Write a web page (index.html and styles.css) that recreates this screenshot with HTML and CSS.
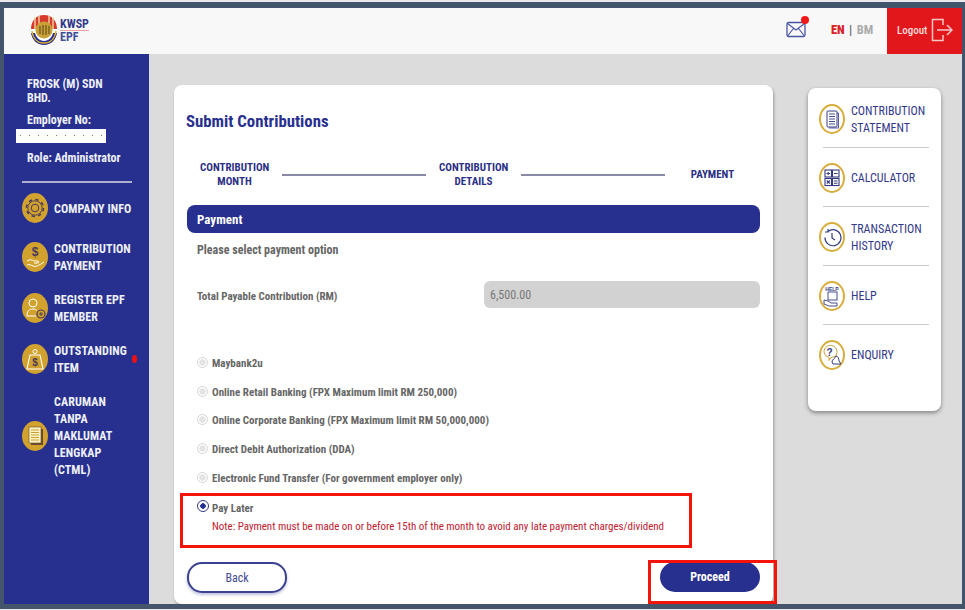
FILE: index.html
```html
<!DOCTYPE html>
<html lang="en">
<head>
<meta charset="utf-8">
<title>Submit Contributions</title>
<link rel="stylesheet" href="styles.css">
</head>
<body>
<div class="frame">
  <header class="topbar">
    <div class="brand">
      <svg class="logo" viewBox="0 0 28 32" width="28" height="32">
        <ellipse cx="14" cy="16" rx="13.500" ry="15.500" fill="#fff"/>
        <path d="M1 15C1 7 6 1 14 1s13 6 13 14z" fill="#d8392f"/>
        <path d="M5 3v12M9 2v13M19 2v13M23 3v12" stroke="#f3d9a0" stroke-width="1.400"/>
        <path d="M1 19c1 7 6 12 13 12s12-5 13-12l-4 0c-1 4-4 8-9 8s-8-4-9-8z" fill="#27308f"/>
        <path d="M2 17c1 8 6 12 12 12s11-4 12-12" fill="none" stroke="#e2b22c" stroke-width="1.400"/>
        <circle cx="14" cy="16" r="8.500" fill="#c9a035"/>
        <path d="M10 12v8M13 11v10M16 11v10M19 12v8" stroke="#6b5420" stroke-width="1.200"/>
      </svg>
      <div class="brand-text"><span class="brand-top">KWSP</span><span class="brand-bottom">EPF</span></div>
    </div>
    <div class="top-actions">
      <span class="mail">
        <svg viewBox="0 0 20 17" width="20" height="17"><rect x="1" y="1.500" width="18" height="14" rx="1.500" fill="none" stroke="#4a55a2" stroke-width="1.300"/><path d="M1.500 2.500 10 9l8.500-6.500M1.500 15 7.500 7.500M18.500 15 12.500 7.500" fill="none" stroke="#4a55a2" stroke-width="1.200"/></svg>
        <i class="mail-dot"></i>
      </span>
      <div class="lang"><b class="lang-on">EN</b> <span class="lang-sep">|</span> <span class="lang-off">BM</span></div>
      <div class="logout">
        <span>Logout</span>
        <svg viewBox="0 0 22 24" width="22" height="24"><path d="M12 7V1.500H1.500v21H12V17" fill="none" stroke="#f6c7c7" stroke-width="1.500"/><path d="M6 12h15M16 7l5 5-5 5" fill="none" stroke="#f6c7c7" stroke-width="1.500"/></svg>
      </div>
    </div>
  </header>
  <div class="body-row">
    <aside class="sidebar">
      <div class="profile">
        <p class="company">FROSK (M) SDN<br>BHD.</p>
        <p class="employer">Employer No:</p>
        <div class="redacted"></div>
        <p class="role">Role: Administrator</p>
      </div>
      <hr class="side-rule">
      <nav class="side-nav">
        <a class="side-item">
          <span class="side-icon"><svg viewBox="0 0 26 30" width="26" height="30"><circle cx="13" cy="15" r="8.500" fill="none" stroke="#4b3a5c" stroke-width="1.600" stroke-dasharray="3.340 3.340"/><circle cx="13" cy="15" r="7.200" fill="none" stroke="#4b3a5c" stroke-width=".9"/><circle cx="13" cy="15" r="3.800" fill="none" stroke="#4b3a5c" stroke-width="1"/></svg></span>
          <span class="side-label">COMPANY INFO</span>
        </a>
        <a class="side-item">
          <span class="side-icon"><svg viewBox="0 0 26 30" width="26" height="30"><text x="13" y="14" class="icon-dollar">$</text><path d="M5 19c3-2 5-1 7 0h4c1 0 1 2 0 2h-4M5 23c2-1 4 0 6 1 3 1 5 0 11-4" fill="none" stroke="#fff" stroke-width="1"/></svg></span>
          <span class="side-label">CONTRIBUTION<br>PAYMENT</span>
        </a>
        <a class="side-item">
          <span class="side-icon"><svg viewBox="0 0 26 30" width="26" height="30"><circle cx="11" cy="10" r="4" fill="none" stroke="#fff" stroke-width="1"/><path d="M5 23c0-5 2-7 6-7 2 0 3 .500 4 1.500M5 23h9" fill="none" stroke="#fff" stroke-width="1"/><circle cx="19" cy="21" r="4" fill="none" stroke="#4b3a5c" stroke-width="1.200"/><path d="M19 19v4M17 21h4" stroke="#4b3a5c"/></svg></span>
          <span class="side-label">REGISTER EPF<br>MEMBER</span>
        </a>
        <a class="side-item">
          <span class="side-icon"><svg viewBox="0 0 26 30" width="26" height="30"><path d="M8 11h10l3 14H5z" fill="none" stroke="#fff" stroke-width="1.100"/><circle cx="13" cy="7.500" r="2" fill="none" stroke="#fff"/><text x="13" y="22" class="icon-bag">$</text></svg></span>
          <span class="side-label">OUTSTANDING<br>ITEM</span>
          <i class="side-dot"></i>
        </a>
        <a class="side-item">
          <span class="side-icon"><svg viewBox="0 0 26 30" width="26" height="30"><rect x="9" y="8" width="12" height="16" fill="#6b4a28"/><rect x="7" y="6" width="12" height="16" fill="#fbf2c4" stroke="#6b4a28" stroke-width=".6"/><path d="M9 9h8M9 11.500h8M9 14h8M9 16.500h8M9 19h8" stroke="#c9a035"/></svg></span>
          <span class="side-label">CARUMAN<br>TANPA<br>MAKLUMAT<br>LENGKAP<br>(CTML)</span>
        </a>
      </nav>
    </aside>
    <main class="content">
      <section class="card">
        <h1 class="title">Submit Contributions</h1>
        <div class="stepper">
          <span class="step">CONTRIBUTION<br>MONTH</span>
          <span class="step-line"></span>
          <span class="step">CONTRIBUTION<br>DETAILS</span>
          <span class="step-line"></span>
          <span class="step step-last">PAYMENT</span>
        </div>
        <div class="bar">Payment</div>
        <div class="inner">
          <p class="prompt">Please select payment option</p>
          <div class="total">
            <span class="total-label">Total Payable Contribution (RM)</span>
            <div class="total-value">6,500.00</div>
          </div>
          <ul class="options">
            <li class="option"><i class="radio"></i>Maybank2u</li>
            <li class="option"><i class="radio"></i>Online Retail Banking (FPX Maximum limit RM 250,000)</li>
            <li class="option"><i class="radio"></i>Online Corporate Banking (FPX Maximum limit RM 50,000,000)</li>
            <li class="option"><i class="radio"></i>Direct Debit Authorization (DDA)</li>
            <li class="option"><i class="radio"></i>Electronic Fund Transfer (For government employer only)</li>
          </ul>
          <div class="paylater">
            <div class="option"><i class="radio radio-on"></i>Pay Later</div>
            <p class="note">Note: Payment must be made on or before 15th of the month to avoid any late payment charges/dividend</p>
          </div>
        </div>
        <div class="actions">
          <button class="btn btn-back">Back</button>
          <button class="btn btn-go">Proceed</button>
        </div>
        <div class="mark mark-later"></div>
        <div class="mark mark-go"></div>
      </section>
      <aside class="tools">
        <a class="tool">
          <span class="tool-icon"><svg viewBox="0 0 26 30" width="26" height="30"><rect x="8" y="7" width="10" height="16" rx="1" fill="none" stroke="#333a80" stroke-width="1"/><path d="M10 10h6M10 12.500h6M10 15h6M10 17.500h6M10 20h6" stroke="#333a80" stroke-width=".9"/><path d="M18 9h1.500v15H10" fill="none" stroke="#333a80" stroke-width=".8"/></svg></span>
          <span class="tool-label">CONTRIBUTION<br>STATEMENT</span>
        </a>
        <a class="tool">
          <span class="tool-icon"><svg viewBox="0 0 26 30" width="26" height="30"><g fill="none" stroke="#333a80" stroke-width="1.100"><rect x="6" y="7" width="6.500" height="7"/><rect x="13.500" y="7" width="6.500" height="7"/><rect x="6" y="15.500" width="6.500" height="7"/><rect x="13.500" y="15.500" width="6.500" height="7"/><path d="M7.500 10.500h3.500M9.200 9v3M15 10.500h3.500M7.800 17.500l3 3M10.800 17.500l-3 3M15 18h3.500M15 20.300h3.500"/></g></svg></span>
          <span class="tool-label">CALCULATOR</span>
        </a>
        <a class="tool">
          <span class="tool-icon"><svg viewBox="0 0 26 30" width="26" height="30"><g fill="none" stroke="#333a80" stroke-width="1.200"><path d="M9 9.500a8 8 0 1 1-3 6"/><path d="M9 7v3H6"/><path d="M13 11v5l3 2"/></g></svg></span>
          <span class="tool-label">TRANSACTION<br>HISTORY</span>
        </a>
        <a class="tool">
          <span class="tool-icon"><svg viewBox="0 0 26 30" width="26" height="30"><text x="13" y="9.500" class="icon-help">HELP</text><g fill="none" stroke="#333a80" stroke-width=".9"><rect x="9" y="11" width="9" height="8"/><path d="M5 19l4 1 3 2h6v3H10l-5-2z"/></g></svg></span>
          <span class="tool-label">HELP</span>
        </a>
        <a class="tool">
          <span class="tool-icon"><svg viewBox="0 0 26 30" width="26" height="30"><path d="M5 12a6.500 6.500 0 1 1 11 4.500l-4 1-2 3v-3a6.500 6.500 0 0 1-5-5.500z" fill="none" stroke="#c9a035" stroke-width="1"/><text x="10.500" y="16" class="icon-q">?</text><path d="M13 22c0-3 3-3 4-6 2 0 3 3 3 5l2 3h-8z" fill="none" stroke="#333a80" stroke-width="1"/></svg></span>
          <span class="tool-label">ENQUIRY</span>
        </a>
      </aside>
    </main>
  </div>
</div>
</body>
</html>
```

FILE: styles.css
```css
* { box-sizing: border-box; }
html, body { margin: 0; padding: 0; }
body {
  width: 965px;
  height: 610px;
  padding-top: 2px;
  overflow: hidden;
  background: #e9e9ea;
  font-family: Roboto, "Liberation Sans", Arial, sans-serif;
  font-stretch: 75%;
}
button { font-stretch: inherit; }
p, h1, ul { margin: 0; padding: 0; list-style: none; }
.frame {
  width: 965px;
  height: 607px;
  border: solid #44546a;
  border-width: 6px 3px 5px 4px;
  display: flex;
  flex-direction: column;
  overflow: hidden;
}
.topbar {
  height: 46px;
  flex: none;
  display: flex;
  justify-content: space-between;
  background: #f8f8f9;
}
.brand { display: flex; align-items: center; gap: 2px; padding: 0 0 2px 26px; }
.logo { display: block; }
.brand-text { display: flex; flex-direction: column; color: #34398c; font-size: 12px; font-weight: 700; line-height: 12px; }
.brand-top { border-bottom: 1px solid #e6a0a8; }
.brand-bottom { color: #3f4f96; }
.top-actions { display: flex; align-items: center; }
.mail { position: relative; display: block; width: 20px; height: 17px; margin: 0 25px 3px 0; }
.mail svg { display: block; }
.mail-dot { position: absolute; right: -3px; top: -5px; width: 8px; height: 8px; border-radius: 50%; background: #f01818; }
.lang { width: 56px; padding-bottom: 3px; font-size: 12.500px; word-spacing: 1.500px; color: #999; font-weight: 700; white-space: nowrap; }
.lang-on { color: #d9232a; }
.lang-sep { color: #666; }
.lang-off { color: #aaa; font-weight: 700; }
.logout {
  width: 75px;
  height: 46px;
  display: flex;
  align-items: center;
  gap: 4px;
  padding: 0 0 2px 10px;
  background: #e2171c;
  color: #f8dcdc;
  font-size: 11px;
  font-weight: 500;
}
.logout svg { display: block; }
.body-row { flex: 1; min-height: 0; display: flex; }
.sidebar {
  width: 145px;
  flex: none;
  padding: 23px 0 0 18px;
  background: #28308f;
  color: #eef0f8;
  font-size: 12px;
  font-weight: 700;
}
.profile { padding-left: 5px; line-height: 14px; }
.employer { margin-top: 8px; }
.redacted {
  width: 90px;
  height: 14px;
  margin: 2px 0 0 -11px;
  background: #fff radial-gradient(circle, #777 0.6px, transparent 1px) 0 2px / 9px 9px;
}
.role { margin-top: 8px; }
.side-rule { width: 110px; height: 2px; margin: 16px 0 10px; border: 0; background: #aeb0d0; }
.side-nav { display: flex; flex-direction: column; gap: 17px; }
.side-item { position: relative; display: flex; align-items: center; gap: 6px; min-height: 30px; line-height: 17px; }
.side-icon { width: 26px; height: 30px; flex: none; border-radius: 50%; background: #d2a22e; }
.side-icon svg, .tool-icon svg { display: block; }
.side-label { padding-top: 1px; margin-bottom: -1px; white-space: nowrap; letter-spacing: .1px; }
.side-dot { position: absolute; left: 110px; top: 13px; width: 5px; height: 8px; border-radius: 50%; background: #ee1111; }
.icon-dollar { font: 700 12px "Liberation Sans", sans-serif; fill: #4b3a5c; text-anchor: middle; }
.icon-bag { font: 700 10px "Liberation Sans", sans-serif; fill: #4b3a5c; text-anchor: middle; }
.icon-help { font: 700 5px "Liberation Sans", sans-serif; fill: #333a80; text-anchor: middle; }
.icon-q { font: 700 10px "Liberation Sans", sans-serif; fill: #333a80; text-anchor: middle; }
.content {
  flex: 1;
  min-width: 0;
  display: flex;
  align-items: flex-start;
  gap: 35px;
  padding: 31px 0 0 25px;
  background: #dcdcdc;
  overflow: hidden;
}
.card {
  position: relative;
  width: 599px;
  height: 519px;
  flex: none;
  padding: 26px 13px 0;
  background: #fff;
  border-radius: 8px;
  box-shadow: 1px 2px 3px rgba(0,0,0,.3);
}
.title { margin-left: -1px; font-size: 16.800px; line-height: 20px; font-weight: 700; color: #28308f; }
.stepper { display: flex; align-items: center; margin-top: 30px; padding-left: 13px; color: #2b2f85; font-size: 11px; line-height: 14px; font-weight: 700; text-align: center; }
.step { white-space: nowrap; flex: none; width: 69px; }
.step-last { width: 45px; margin-left: 12px; }
.step-line { width: 144px; height: 2px; margin: 0 13px; background: #8a8aa5; }
.bar { height: 28px; margin-top: 16px; padding: 1px 0 0 10px; background: #28308f; border-radius: 8px; color: #fff; font-size: 13px; font-weight: 700; line-height: 27px; }
.inner { padding-left: 10px; }
.prompt { margin-top: 10px; font-size: 12px; line-height: 14px; font-weight: 700; color: #666; }
.total { display: flex; align-items: center; justify-content: space-between; margin-top: 24px; }
.total-label { padding-top: 3px; font-size: 11px; font-weight: 700; color: #666; }
.total-value { width: 276px; height: 27px; padding-left: 6px; background: #d2d2d2; border-radius: 6px; font-size: 12px; line-height: 28px; color: #777; }
.options { display: flex; flex-direction: column; gap: 14.700px; margin-top: 49px; }
.option { position: relative; padding-left: 15px; font-size: 11px; line-height: 14px; font-weight: 700; color: #666; white-space: nowrap; }
.radio { position: absolute; left: 0; top: 0; width: 11px; height: 11px; border-radius: 50%; border: 1px solid #d4d4d4; background: radial-gradient(circle, #e4e4e4 0 3px, #fff 3.500px); }
.radio-on { top: -2px; width: 12px; height: 12px; border-color: #333a85; background: radial-gradient(circle, #28308f 0 2.500px, #fff 3px); }
.paylater { margin-top: 16px; }
.note { margin-top: 4px; padding-left: 15px; font-size: 11px; line-height: 14px; letter-spacing: -.02px; color: #c0202e; white-space: nowrap; }
.actions { display: flex; justify-content: space-between; align-items: flex-start; margin-top: 28px; }
.btn { width: 100px; height: 30px; padding: 0; border-radius: 15px; font-family: inherit; font-size: 12px; }
.btn-back { height: 31px; padding-top: 2px; background: #fff; border: 2px solid #3a4190; color: #444c96; box-shadow: 0 2px 3px rgba(40,48,143,.3); }
.btn-go { background: #28308f; border: 0; color: #fff; font-weight: 700; }
.mark { position: absolute; border: 3px solid #f5140a; }
.mark-later { left: 6px; top: 408px; width: 512px; height: 55px; }
.mark-go { left: 474px; top: 475px; width: 129px; height: 44px; }
.tools {
  width: 133px;
  height: 323px;
  flex: none;
  margin-top: 3px;
  padding: 1px 12px 0 11px;
  background: #fff;
  border-radius: 8px;
  box-shadow: 0 2px 4px rgba(0,0,0,.4);
}
.tool { position: relative; display: flex; align-items: center; gap: 6px; height: 59px; padding: 12px 0; color: #33398a; font-size: 12px; line-height: 17px; }
.tool::after { content: ""; position: absolute; left: 4px; right: 0; bottom: 0; height: 1px; background: #c8c8c8; }
.tool:last-child::after { display: none; }
.tool-icon { width: 26px; height: 30px; flex: none; border: 2px solid #d8ad3c; border-radius: 50%; }
.tool-icon svg { margin: -2px; }
.tool-label { padding-top: 1px; margin-bottom: -1px; white-space: nowrap; }
```
